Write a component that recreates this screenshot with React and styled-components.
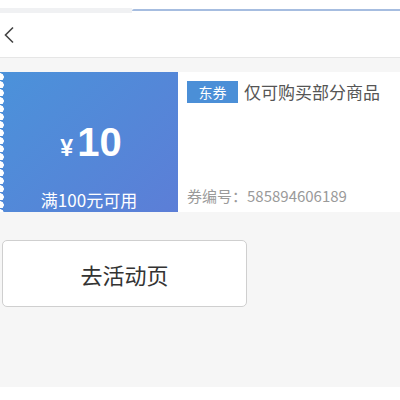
import React from "react";
import styled, { createGlobalStyle } from "styled-components";

const Global = createGlobalStyle`
  html, body { margin: 0; padding: 0; background: #fff; }
  *, *::before, *::after { box-sizing: border-box; }
  body { font-family: "Noto Sans CJK SC", "Noto Sans", sans-serif; }
`;

const Page = styled.div`
  width: 400px;
  display: flex;
  flex-direction: column;
`;

const TopStrip = styled.div`
  height: 13px;
  display: flex;
  align-items: flex-start;
  background: #fff;
`;

const GreyLine = styled.div`
  width: 132px;
  height: 5px;
  margin-top: 8px;
  background: #f0f1f3;
`;

const BlueLine = styled.div`
  flex: 1;
  height: 2px;
  margin-top: 9px;
  background: #a6bde0;
  border-top-left-radius: 3px;
`;

const Header = styled.div`
  height: 45px;
  display: flex;
  align-items: center;
  padding-left: 3px;
  background: #fff;
  border-bottom: 1px solid #e6e6e6;
`;

const Body = styled.div`
  background: #f6f6f6;
  height: 329px;
  padding-top: 14px;
  display: flex;
  flex-direction: column;
`;

const Coupon = styled.div`
  display: flex;
  height: 140px;
`;

const Left = styled.div`
  position: relative;
  width: 178px;
  background: linear-gradient(135deg, #4b92da 0%, #5487d8 55%, #5c7ed7 100%);
  color: #fff;
  display: flex;
  flex-direction: column;
  align-items: center;
`;

const Scallop = styled.div`
  position: absolute;
  left: 0;
  top: 0;
  bottom: 0;
  width: 5px;
  background: radial-gradient(circle at 0 5px, #fff 3.5px, transparent 4px);
  background-size: 5px 8px;
`;

const Amount = styled.div`
  margin-top: 50px;
  display: flex;
  align-items: baseline;
  padding-left: 4px;
  font-family: "Liberation Sans", Arial, sans-serif;
`;

const Yen = styled.span`
  font-size: 23px;
  font-weight: bold;
  margin-right: 4px;
`;

const Value = styled.span`
  font-size: 40px;
  font-weight: bold;
  line-height: 1;
`;

const Cond = styled.div`
  margin-top: auto;
  font-size: 17px;
  line-height: 24px;
`;

const Right = styled.div`
  flex: 1;
  background: #fff;
  padding: 7px 0 6px 9px;
  display: flex;
  flex-direction: column;
`;

const TitleRow = styled.div`
  display: flex;
  align-items: center;
`;

const Tag = styled.span`
  width: 51px;
  height: 22px;
  background: #4b8fd7;
  color: #fff;
  font-size: 14px;
  line-height: 22px;
  text-align: center;
  margin-right: 6px;
`;

const Title = styled.span`
  font-size: 17px;
  color: #555;
`;

const Code = styled.div`
  margin-top: auto;
  font-size: 15px;
  color: #9a9a9a;
  line-height: 20px;
`;

const Button = styled.button`
  margin: 28px 0 0 2px;
  width: 245px;
  height: 67px;
  background: #fff;
  border: 1px solid #cfcfcf;
  border-radius: 5px;
  font-family: "Noto Sans CJK SC", sans-serif;
  font-size: 22px;
  color: #333;
  cursor: pointer;
`;

export default function App() {
  return (
    <>
      <Global />
      <Page>
        <TopStrip>
          <GreyLine />
          <BlueLine />
        </TopStrip>
        <Header>
          <svg width="12" height="18" viewBox="0 0 12 18">
            <path d="M10 1.5 L2.5 9 L10 16.5" fill="none" stroke="#444" strokeWidth="1.6" />
          </svg>
        </Header>
        <Body>
          <Coupon>
            <Left>
              <Scallop />
              <Amount>
                <Yen>¥</Yen>
                <Value>10</Value>
              </Amount>
              <Cond>满100元可用</Cond>
            </Left>
            <Right>
              <TitleRow>
                <Tag>东券</Tag>
                <Title>仅可购买部分商品</Title>
              </TitleRow>
              <Code>券编号：585894606189</Code>
            </Right>
          </Coupon>
          <Button>去活动页</Button>
        </Body>
      </Page>
    </>
  );
}
